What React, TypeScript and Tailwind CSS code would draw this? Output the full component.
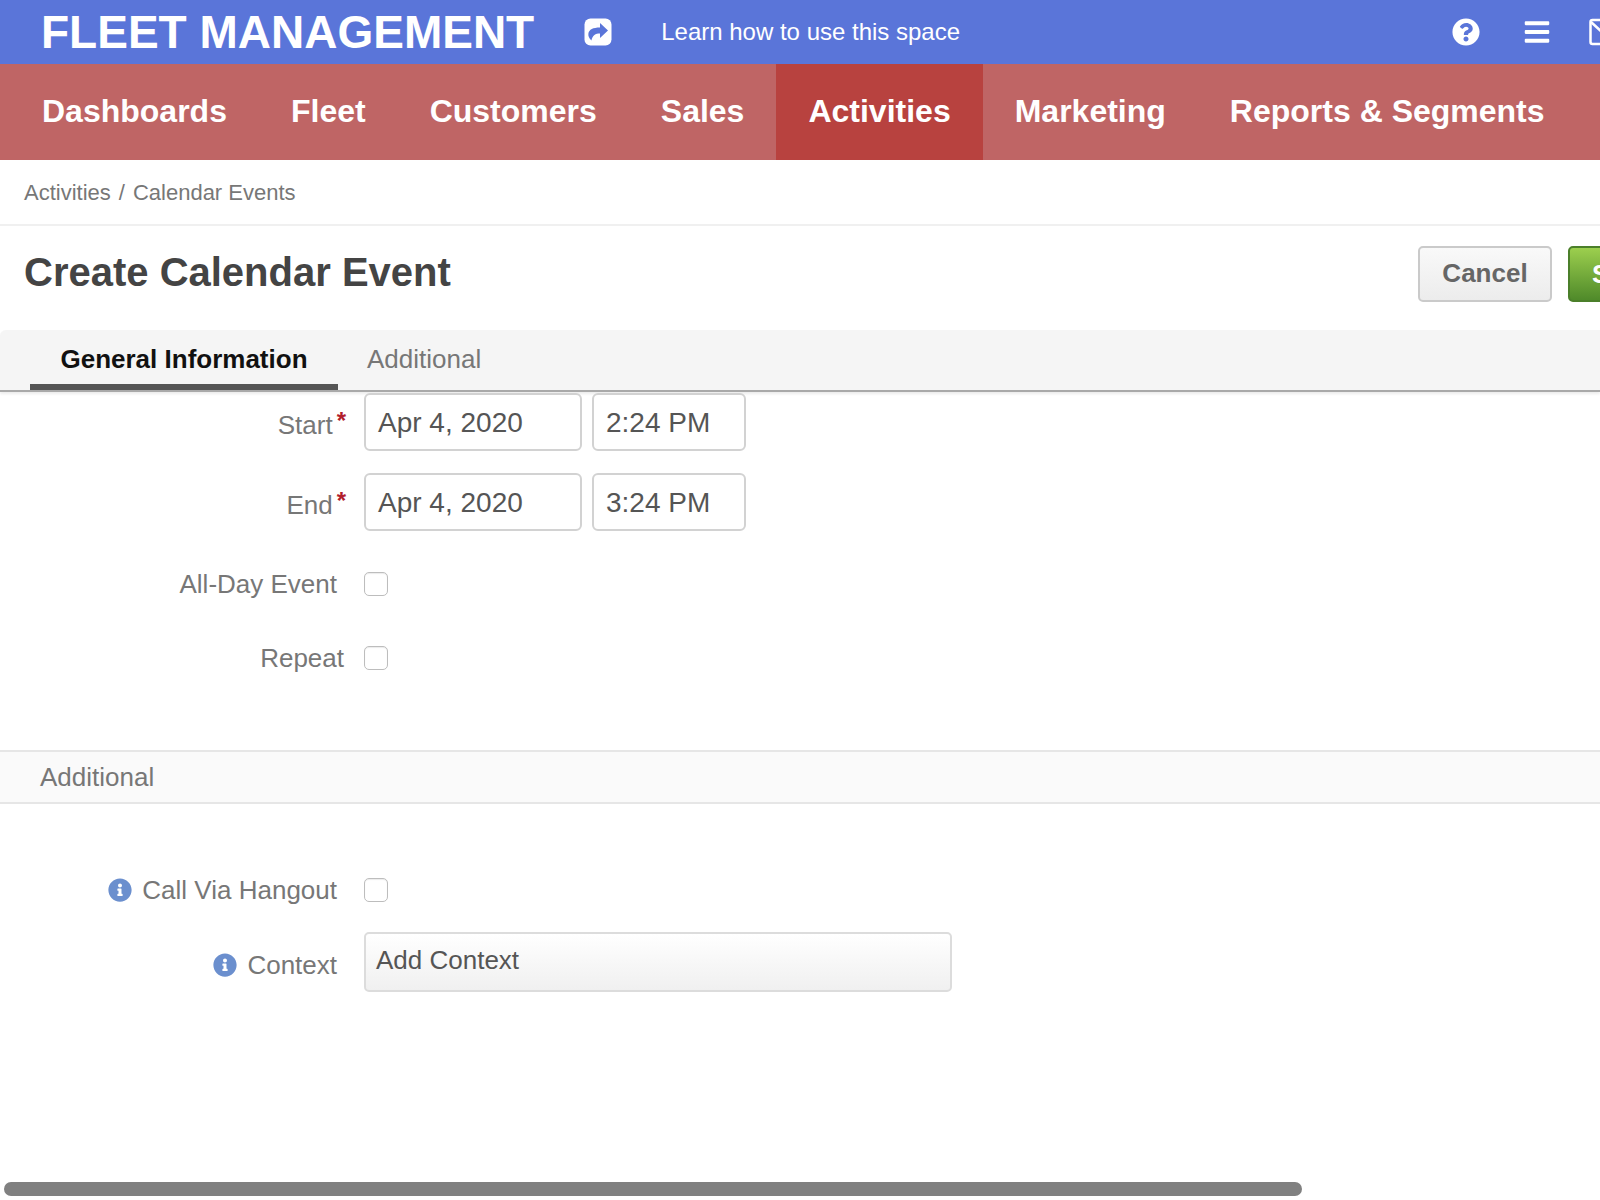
import type { ReactNode } from "react";
import { FaBars, FaInfoCircle, FaQuestionCircle } from "react-icons/fa";

const NAV_ITEMS = ["Dashboards", "Fleet", "Customers", "Sales", "Activities", "Marketing", "Reports & Segments"];

function Checkbox() {
  return <div className="h-6 w-6 rounded-[5px] border border-[#bdbdbd] bg-white shadow-[inset_0_1px_1px_rgba(0,0,0,0.08)]" />;
}

function TextBox({ width, children }: { width: string; children: ReactNode }) {
  return (
    <div className={`flex h-[58px] ${width} items-center rounded-[6px] border-2 border-[#d2d2d2] bg-white pl-3 pt-[2px] text-[28px] text-[#555]`}>
      {children}
    </div>
  );
}

function Required({ label }: { label: string }) {
  return (
    <div className="flex w-[346px] justify-end pt-[17px] text-[26px] leading-[30px] text-[#777]">
      {label}
      <span className="ml-[4px] mt-[-4px] text-[24px] font-bold text-[#b1202c]">*</span>
    </div>
  );
}

function DateRow({ label, date, time }: { label: string; date: string; time: string }) {
  return (
    <div className="flex">
      <Required label={label} />
      <div className="ml-[18px] flex gap-[10px]">
        <TextBox width="w-[218px]">{date}</TextBox>
        <TextBox width="w-[154px]">{time}</TextBox>
      </div>
    </div>
  );
}

export default function App() {
  return (
    <div className="relative h-[1200px] w-[1600px] overflow-hidden bg-white font-['Liberation_Sans',Arial,sans-serif]">
      {/* Top bar */}
      <header className="flex h-16 items-center whitespace-nowrap bg-[#5a75d9] text-white">
        <h1 className="ml-[41px] text-[46px] font-bold leading-none">FLEET MANAGEMENT</h1>
        <svg className="ml-[50px] shrink-0" width="28" height="28" viewBox="0 0 28 28">
          <rect x="0.5" y="0.5" width="27" height="27" rx="6" fill="white" />
          <path
            fill="#5a75d9"
            d="M16 5l8 7.5-8 7.5v-4.6c-4.6 0-7.4 1.6-8.6 7.1-2.4-2.200-3.400-4.600-3-7 .7-4 4.600-6 11.600-6z"
          />
        </svg>
        <span className="ml-[49px] text-[24px]">Learn how to use this space</span>
        <FaQuestionCircle className="ml-[492px] shrink-0 text-[28px]" />
        <FaBars className="ml-[43px] shrink-0 text-[28px]" />
        <svg className="ml-[38px] shrink-0" width="30" height="28" viewBox="0 0 30 28" fill="none" stroke="white" strokeWidth="2.5">
          <rect x="1.5" y="2" width="27" height="24" rx="2" />
          <path d="M2 4l13 12 13-12" />
        </svg>
      </header>

      {/* Main nav */}
      <nav className="flex h-24 bg-[#bf6565] pl-[10px] text-[32px] font-bold text-white">
        {NAV_ITEMS.map((item) => (
          <div
            key={item}
            className={`flex items-center px-[32px] pb-[2px] whitespace-nowrap ${item === "Activities" ? "bg-[#b8423f]" : ""}`}
          >
            {item}
          </div>
        ))}
      </nav>

      {/* Breadcrumb */}
      <div className="flex h-[66px] items-center border-b-2 border-[#f0f0f0] pl-6 text-[22px] text-[#777]">
        Activities<span className="mx-[8px]">/</span>Calendar Events
      </div>

      {/* Page title */}
      <div className="flex h-[104px] items-start">
        <h2 className="ml-6 mt-[23px] text-[40px] font-bold leading-[46px] text-[#444]">Create Calendar Event</h2>
        <div className="ml-auto mt-5 flex gap-[16px]">
          <button className="h-14 w-[134px] rounded-[5px] border-2 border-[#cacaca] bg-gradient-to-b from-[#f9f9f9] to-[#ececec] pb-[2px] text-[26px] font-bold text-[#666]">
            Cancel
          </button>
          <div className="-mr-[100px] flex h-14 w-[132px] items-center rounded-[5px] border-2 border-[#4b7f2a] bg-gradient-to-b from-[#9ccf4e] to-[#4f8a2a] pl-[22px] text-[26px] font-bold text-white">
            Save
          </div>
        </div>
      </div>

      {/* Tabs */}
      <div className="flex h-[62px] items-stretch rounded-tl-[6px] border-b-2 border-[#a9a9a9] bg-[#f5f5f5] pl-[30px] shadow-[0_2px_3px_rgba(0,0,0,0.08)]">
        <div className="flex w-[308px] items-center justify-center border-b-[6px] border-[#555] pt-[4px] text-[26px] font-bold text-[#111]">
          General Information
        </div>
        <div className="ml-[29px] flex items-center pb-[2px] text-[26px] text-[#777]">Additional</div>
      </div>

      {/* Form */}
      <div className="pt-px">
        <DateRow label="Start" date="Apr 4, 2020" time="2:24 PM" />
        <div className="mt-[22px]">
          <DateRow label="End" date="Apr 4, 2020" time="3:24 PM" />
        </div>

        <div className="mt-[38px] flex items-center">
          <div className="w-[337px] text-right text-[26px] leading-[30px] text-[#777]">All-Day Event</div>
          <div className="ml-[27px]"><Checkbox /></div>
        </div>

        <div className="mt-[44px] flex items-center">
          <div className="w-[344px] text-right text-[26px] leading-[30px] text-[#777]">Repeat</div>
          <div className="ml-[20px]"><Checkbox /></div>
        </div>

        <div className="mt-[77px] flex h-[54px] items-center border-y-2 border-[#e6e6e6] bg-[#fafafa] pl-[40px] text-[26px] text-[#777]">
          Additional
        </div>

        <div className="mt-[71px] flex items-center">
          <div className="flex w-[337px] items-center justify-end text-[26px] leading-[30px] text-[#777]">
            <FaInfoCircle className="mr-[10px] text-[24px] text-[#6b8fce]" />
            Call Via Hangout
          </div>
          <div className="ml-[27px]"><Checkbox /></div>
        </div>

        <div className="mt-[27px] flex items-start">
          <div className="flex w-[337px] items-center justify-end pt-[18px] text-[26px] leading-[30px] text-[#777]">
            <FaInfoCircle className="mr-[10px] text-[24px] text-[#6b8fce]" />
            Context
          </div>
          <div className="ml-[27px] flex h-[60px] w-[588px] items-center rounded-[5px] border-2 border-[#dcdcdc] bg-gradient-to-b from-white to-[#f0f0f0] pb-[3px] pl-[10px] text-[26px] text-[#555]">
            Add Context
          </div>
        </div>
      </div>

      {/* Scrollbar thumb */}
      <div className="absolute bottom-[4px] left-[4px] h-[14px] w-[1298px] rounded-full bg-[#808080]" />
    </div>
  );
}
